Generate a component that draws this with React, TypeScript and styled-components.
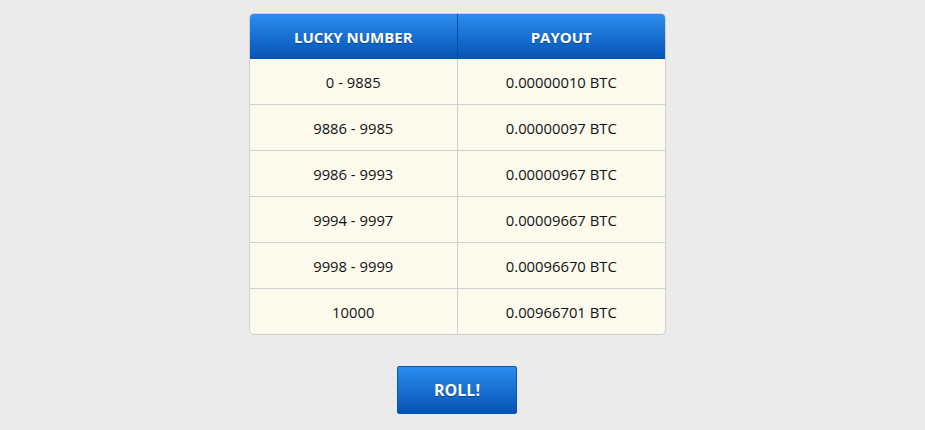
import React from 'react';
import styled, { createGlobalStyle } from 'styled-components';

const rows = [
    { range: '0 - 9885', payout: '0.00000010 BTC' },
    { range: '9886 - 9985', payout: '0.00000097 BTC' },
    { range: '9986 - 9993', payout: '0.00000967 BTC' },
    { range: '9994 - 9997', payout: '0.00009667 BTC' },
    { range: '9998 - 9999', payout: '0.00096670 BTC' },
    { range: '10000', payout: '0.00966701 BTC' },
];

const App: React.FC = () => {
    return (
        <_Wrap>
            <GlobalStyle />
            <_Table>
                <thead>
                    <tr>
                        <_Th>Lucky Number</_Th>
                        <_Th>Payout</_Th>
                    </tr>
                </thead>
                <tbody>
                    {rows.map((r) => (
                        <tr key={r.range}>
                            <_Td>{r.range}</_Td>
                            <_Td>{r.payout}</_Td>
                        </tr>
                    ))}
                </tbody>
            </_Table>
            <_RollBtn type="button">ROLL!</_RollBtn>
        </_Wrap>
    );
};

export default App;

const GlobalStyle = createGlobalStyle`
html, body {
    margin: 0;
    padding: 0;
    background: #ebebeb;
}
body {
    font-family: 'Open Sans', 'Liberation Sans', sans-serif;
}
`;

const _Wrap = styled.div`
width: 925px;
height: 430px;
display: flex;
flex-direction: column;
align-items: center;
padding-top: 13px;
padding-right: 11px;
box-sizing: border-box;
background: #ebebeb;
`;

const _Table = styled.table`
width: 417px;
border-collapse: separate;
border-spacing: 0;
border: 1px solid #cfcfcf;
border-radius: 5px;
overflow: hidden;
background: #fcfaed;
`;

const _Th = styled.th`
height: 45px;
padding: 0;
font-size: 15px;
font-weight: 700;
text-transform: uppercase;
color: #ffffff;
text-shadow: 0 1px 1px rgba(0, 0, 0, 0.35);
background: linear-gradient(to bottom, #2c8df0, #0453b4);
border-left: 1px solid #0a4c9c;
width: 50%;

&:first-child {
    border-left: 0;
}
`;

const _Td = styled.td`
height: 45px;
padding: 0;
text-align: center;
font-size: 14.8px;
color: #111111;
border-top: 1px solid #cfcfcf;
border-left: 1px solid #cfcfcf;

tr:first-child > & {
    border-top: 0;
}

&:first-child {
    border-left: 0;
}
`;

const _RollBtn = styled.button`
margin-top: 31px;
width: 120px;
height: 48px;
font-family: 'Open Sans', 'Liberation Sans', sans-serif;
font-size: 16px;
font-weight: 700;
color: #ffffff;
text-shadow: 0 1px 1px rgba(0, 0, 0, 0.35);
background: linear-gradient(to bottom, #2c8df0, #0453b4);
border: 1px solid #0a55b0;
border-radius: 2px;
cursor: pointer;
`;
